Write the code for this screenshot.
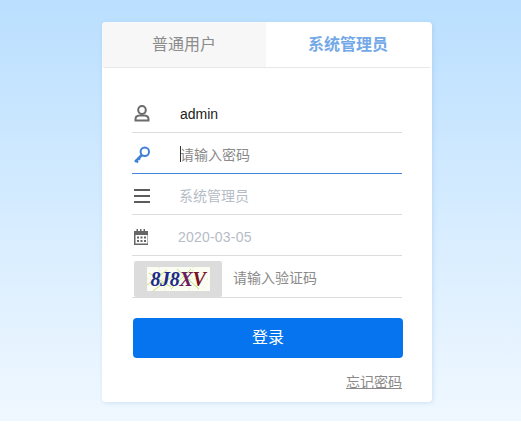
<div class="page">
  <div class="card">
    <div class="tabs">
      <div class="tab inactive">普通用户</div>
      <div class="tab active">系统管理员</div>
    </div>
    <div class="form">
      <div class="row">
        <span class="icon user">
          <svg width="16" height="17" viewBox="0 0 16 17" fill="none" stroke="#6b6b6b" stroke-width="2">
            <ellipse cx="8" cy="5" rx="3.8" ry="4" />
            <path d="M1.500 15.600v-1.400c0-2 1.500-3.400 4-3.600h5c2.500 .2 4 1.600 4 3.600v1.400z" />
          </svg>
        </span>
        <span class="value">admin</span>
      </div>
      <div class="row focus">
        <span class="icon key">
          <svg width="18" height="18" viewBox="0 0 18 18" fill="none" stroke="#3f7fd6" stroke-width="2">
            <circle cx="11.800" cy="5.800" r="4.200" />
            <path d="M8.800 9L2 15.800" stroke-width="2.500" />
            <path d="M2.500 14l2.500 2.500M5 11.800l2 2" stroke-width="2" />
          </svg>
        </span>
        <span class="caret"></span>
        <span class="ph">请输入密码</span>
      </div>
      <div class="row">
        <span class="icon">
          <svg width="16" height="16" viewBox="0 0 16 16" stroke="#5c5c5c" stroke-width="2">
            <path d="M0 2h16M0 8h16M0 14h16" />
          </svg>
        </span>
        <span class="ph light role">系统管理员</span>
      </div>
      <div class="row">
        <span class="icon">
          <svg width="15" height="16" viewBox="0 0 15 16" fill="#666">
            <path d="M2.500 0h1.500v2h2V0h1.500v2h2V0h1.500v2h3v14H0V2h2.500zM1.500 6v8.500h12V6z" />
            <path d="M3 7.500h2v2H3zM6.500 7.500h2v2h-2zM10 7.500h2v2h-2zM3 11h2v2H3zM6.500 11h2v2h-2zM10 11h2v2h-2z" />
          </svg>
        </span>
        <span class="ph light date">2020-03-05</span>
      </div>
      <div class="row captcha-row">
        <div class="captcha-box">
          <div class="captcha">
            <svg class="noise" width="63" height="24" viewBox="0 0 63 24" fill="none" stroke-width="1">
              <path d="M0 18L20 3M6 24L30 6M24 22L44 2M2 6l22 14M30 2l22 20" stroke="#c4e27a" />
              <path d="M0 12h63M12 0l6 24M46 0l-4 24" stroke="#dfe9b0" stroke-dasharray="1 2" />
            </svg>
            <span class="code"><i class="b">8J8</i><i class="r">X</i><i class="g">V</i></span>
          </div>
        </div>
        <span class="ph code-ph">请输入验证码</span>
      </div>
      <button class="login" type="button">登录</button>
      <div class="forgot"><span>忘记密码</span></div>
    </div>
  </div>
</div>

<style>
  :global(body) {
    margin: 0;
    background: #fff;
  }
  .page {
    height: 421px;
    box-sizing: border-box;
    padding-top: 22px;
    background: linear-gradient(180deg, #badfff 0%, #f0f8ff 100%);
    font-family: "Liberation Sans", "Noto Sans CJK SC", sans-serif;
  }
  .card {
    width: 330px;
    height: 380px;
    margin-left: 102px;
    background: #fff;
    border-radius: 4px;
    box-shadow: 1px 1px 4px rgba(120, 160, 210, 0.25);
  }
  .tabs {
    display: flex;
    height: 46px;
    position: relative;
    border-radius: 4px 4px 0 0;
    overflow: hidden;
  }
  .tabs::after {
    content: "";
    position: absolute;
    left: 2px;
    right: 2px;
    bottom: 0;
    height: 1px;
    background: #e8e8e8;
  }
  .tab {
    display: flex;
    align-items: center;
    justify-content: center;
    box-sizing: border-box;
    padding-bottom: 5px;
    font-size: 16px;
  }
  .inactive {
    width: 164px;
    background: #f7f7f7;
    color: #8c8c8c;
  }
  .active {
    flex: 1;
    color: #74a9e8;
    font-weight: 700;
    padding-right: 2px;
  }
  .form {
    padding: 24px 30px 0 30px;
  }
  .row {
    display: flex;
    align-items: center;
    height: 41px;
    box-sizing: border-box;
    padding-top: 4px;
    border-bottom: 1px solid #dcdcdc;
    position: relative;
  }
  .row.focus {
    border-bottom-color: #4488dd;
  }
  .icon {
    width: 48px;
    flex: none;
    display: flex;
    padding-left: 2px;
    box-sizing: border-box;
    align-items: center;
  }
  .icon.user {
    margin-top: -2px;
  }
  .icon.key {
    padding-left: 1px;
  }
  .value {
    font-size: 14px;
    color: #222;
  }
  .ph {
    font-size: 14px;
    color: #8a8a8a;
    margin-top: -2px;
  }
  .ph.light {
    color: #b6bcc6;
  }
  .role {
    margin-left: -1px;
  }
  .ph.date {
    margin: 0 0 0 -2px;
    letter-spacing: 0.2px;
  }
  .caret {
    position: absolute;
    left: 48px;
    top: 13px;
    width: 1px;
    height: 16px;
    background: #333;
  }
  .captcha-row {
    height: 42px;
    padding-top: 0;
    align-items: flex-end;
  }
  .captcha-box {
    width: 88px;
    height: 36px;
    margin-left: 2px;
    background: #dcdcdc;
    border-radius: 2px;
    display: flex;
    align-items: center;
    justify-content: center;
    flex: none;
  }
  .captcha {
    width: 63px;
    height: 24px;
    background: #fbfdf2;
    position: relative;
    display: flex;
    align-items: center;
    justify-content: center;
  }
  .noise {
    position: absolute;
    inset: 0;
  }
  .code {
    position: relative;
    font-family: "Liberation Serif", serif;
    font-size: 20px;
    font-weight: 700;
    letter-spacing: -0.3px;
  }
  .code i {
    font-style: italic;
  }
  .b {
    color: #1c2a8c;
  }
  .r {
    color: #6a1a60;
  }
  .g {
    color: #7a1020;
  }
  .ph.code-ph {
    margin: 0 0 10px 11px;
  }
  .login {
    display: block;
    width: 270px;
    height: 40px;
    margin: 20px 0 0 1px;
    border: 0;
    border-radius: 4px;
    background: #0674ee;
    color: #fff;
    font-family: inherit;
    font-size: 16px;
    padding: 0 0 4px;
  }
  .forgot {
    display: flex;
    justify-content: flex-end;
    margin-top: 13px;
    font-size: 14px;
    color: #8a8a8a;
  }
  .forgot span {
    text-decoration: underline;
  }
</style>
